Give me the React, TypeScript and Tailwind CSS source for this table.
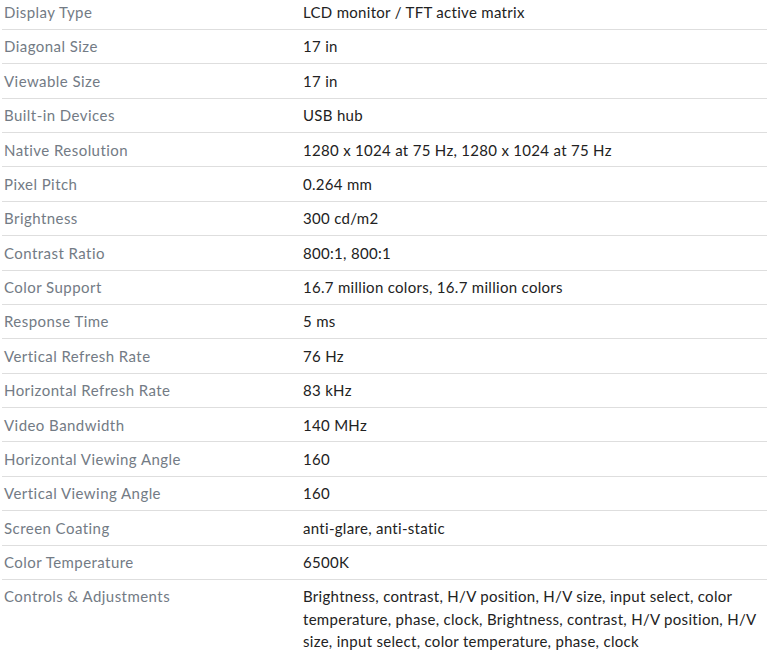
const specs: [string, string][] = [
  ["Display Type", "LCD monitor / TFT active matrix"],
  ["Diagonal Size", "17 in"],
  ["Viewable Size", "17 in"],
  ["Built-in Devices", "USB hub"],
  ["Native Resolution", "1280 x 1024 at 75 Hz, 1280 x 1024 at 75 Hz"],
  ["Pixel Pitch", "0.264 mm"],
  ["Brightness", "300 cd/m2"],
  ["Contrast Ratio", "800:1, 800:1"],
  ["Color Support", "16.7 million colors, 16.7 million colors"],
  ["Response Time", "5 ms"],
  ["Vertical Refresh Rate", "76 Hz"],
  ["Horizontal Refresh Rate", "83 kHz"],
  ["Video Bandwidth", "140 MHz"],
  ["Horizontal Viewing Angle", "160"],
  ["Vertical Viewing Angle", "160"],
  ["Screen Coating", "anti-glare, anti-static"],
  ["Color Temperature", "6500K"],
  [
    "Controls & Adjustments",
    "Brightness, contrast, H/V position, H/V size, input select, color temperature, phase, clock, Brightness, contrast, H/V position, H/V size, input select, color temperature, phase, clock",
  ],
];

export default function App() {
  return (
    <main className="w-[768px] h-[658px] overflow-hidden bg-white font-['Lato',sans-serif] text-[15px] leading-[22.5px]">
      <div className="-mt-[4.4px] ml-[2px] mr-[1px] flex flex-col">
        {specs.map(([label, value], i) => (
          <div
            key={label}
            className={
              "flex py-[5.44px] " +
              (i < specs.length - 1 ? "border-b border-[#dedede]" : "")
            }
          >
            <div className="w-[297px] shrink-0 pl-[2px] tracking-[0.45px] text-[#737b85]">{label}</div>
            <div className="flex-1 pl-[4px] pr-[4px] tracking-[0.3px] text-[#222222]">{value}</div>
          </div>
        ))}
      </div>
    </main>
  );
}
